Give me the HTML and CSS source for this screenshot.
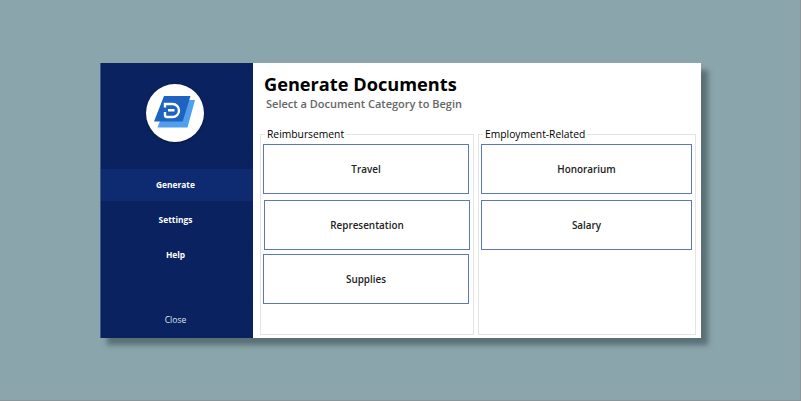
FILE: index.html
```html
<!DOCTYPE html>
<html lang="en">
<head>
<meta charset="utf-8">
<title>Generate Documents</title>
<link rel="stylesheet" href="styles.css">
</head>
<body>
<main class="window">
  <nav class="sidebar">
    <div class="logo">
      <svg class="logo-icon" width="58" height="58" viewBox="0 0 58 58">
        <path d="M22 16 H49 L41.5 43.5 H11.5 Z" fill="#4f9fee"/>
        <path d="M18 12 H44.5 L36.7 37.5 H8 Z" fill="#1e63c0"/>
        <path d="M19 23.5 V20 H26.5 A6.3 6.3 0 0 1 26.5 33 H21 A2 2 0 0 1 19 31 V28 M22 26.3 H28.5" fill="none" stroke="#fff" stroke-width="2.4"/>
      </svg>
    </div>
    <ul class="menu">
      <li class="menu-item active">Generate</li>
      <li class="menu-item">Settings</li>
      <li class="menu-item">Help</li>
    </ul>
    <div class="close">Close</div>
  </nav>
  <section class="content">
    <h1 class="title">Generate Documents</h1>
    <p class="subtitle">Select a Document Category to Begin</p>
    <div class="groups">
      <fieldset class="group group-left">
        <legend>Reimbursement</legend>
        <button class="doc">Travel</button>
        <button class="doc doc-shift">Representation</button>
        <button class="doc doc-tight">Supplies</button>
      </fieldset>
      <fieldset class="group group-right">
        <legend>Employment-Related</legend>
        <button class="doc">Honorarium</button>
        <button class="doc">Salary</button>
      </fieldset>
    </div>
  </section>
</main>
</body>
</html>
```
FILE: styles.css
```css
* { box-sizing: border-box; }
html, body { margin: 0; height: 100%; }
body {
  background: #8aa5ab;
  padding: 63px 0 0 100px;
  font-family: "Open Sans", "Noto Sans", sans-serif;
  overflow: hidden;
  border-right: 1px solid #8c9496;
  border-bottom: 1px solid #8c9496;
}
.window {
  width: 601px;
  height: 275px;
  display: flex;
  background: #fff;
  box-shadow: 7px 7px 5px rgba(50, 70, 75, 0.55);
}
.sidebar {
  width: 153px;
  background: #0a2360;
  display: flex;
  flex-direction: column;
  color: #fff;
  border-left: 1px solid #3a5a80;
}
.logo {
  width: 58px;
  height: 58px;
  margin: 21px 0 0 45px;
  border-radius: 50%;
  background: #fff;
  box-shadow: 0 1px 3px rgba(0, 0, 0, 0.35);
}
.logo-icon { display: block; }
.menu { list-style: none; margin: 27px 0 0; padding: 0; }
.menu-item {
  height: 32px;
  margin-bottom: 3px;
  padding: 0 3px 1px 0;
  display: flex;
  align-items: center;
  justify-content: center;
  font-size: 8.4px;
  font-weight: 700;
}
.active { background: #0e2a70; }
.close {
  margin-top: auto;
  height: 37px;
  padding-right: 3px;
  display: flex;
  align-items: center;
  justify-content: center;
  font-size: 8.6px;
  color: #dfe4f0;
}
.content { flex: 1; padding: 9px 5px 3px 7px; display: flex; flex-direction: column; }
.title {
  margin: 0 0 0 4px;
  font-size: 18.2px;
  line-height: 25px;
  font-weight: 700;
  color: #000;
}
.subtitle {
  margin: 0 0 0 6px;
  font-size: 11px;
  line-height: 14px;
  font-weight: 600;
  color: #666;
}
.groups { flex: 1; display: flex; gap: 4px; margin-top: 16px; }
.group {
  margin: 0;
  padding: 0 2px;
  border: 1px solid #e4e4e4;
  min-width: 0;
  display: block;
}
.group-left { width: 214px; }
.group-right { width: 218px; }
.group legend {
  margin-left: 2px;
  padding: 0 2px;
  font-size: 10.3px;
  line-height: 14px;
  font-weight: 400;
  color: #000;
}
.doc {
  display: block;
  width: 206px;
  height: 50px;
  margin: 3px 0 6px;
  padding: 0;
  background: #fff;
  border: 1px solid #5d77bf;
  font: 600 9.9px "Open Sans", "Noto Sans", sans-serif;
  color: #222;
}
.group-right .doc { width: 211px; }
.doc + .doc { margin-top: 0; }
.doc-shift { margin-left: 1px; margin-bottom: 4px; }
.doc-tight { margin-bottom: 0; }
```
